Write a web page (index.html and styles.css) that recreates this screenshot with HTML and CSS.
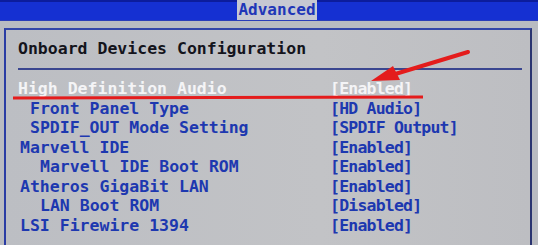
FILE: index.html
```html
<!DOCTYPE html>
<html lang="en">
<head>
  <meta charset="UTF-8">
  <title>Advanced - Onboard Devices Configuration</title>
  <link rel="stylesheet" href="styles.css">
</head>
<body>
  <div class="topbar">
    <div class="tab">Advanced</div>
  </div>

  <div class="panel">
    <div class="title">Onboard Devices Configuration</div>
    <div class="sep"></div>

    <div class="rows">
      <div class="row selected"><span class="label">High Definition Audio</span><span class="value">[Enabled]</span></div>
      <div class="row sub"><span class="label">Front Panel Type</span><span class="value">[HD Audio]</span></div>
      <div class="row sub"><span class="label">SPDIF_OUT Mode Setting</span><span class="value">[SPDIF Output]</span></div>
      <div class="row"><span class="label">Marvell IDE</span><span class="value">[Enabled]</span></div>
      <div class="row sub2"><span class="label">Marvell IDE Boot ROM</span><span class="value">[Enabled]</span></div>
      <div class="row"><span class="label">Atheros GigaBit LAN</span><span class="value">[Enabled]</span></div>
      <div class="row sub2"><span class="label">LAN Boot ROM</span><span class="value">[Disabled]</span></div>
      <div class="row"><span class="label">LSI Firewire 1394</span><span class="value">[Enabled]</span></div>
    </div>
  </div>

  <!-- red annotation drawn over the screen -->
  <svg class="markup" width="538" height="245" viewBox="0 0 538 245">
    <line x1="13" y1="98" x2="423" y2="97" stroke="#e41c1c" stroke-width="3"/>
    <line x1="468" y1="52" x2="392" y2="75" stroke="#e41c1c" stroke-width="4" stroke-linecap="round"/>
    <polygon points="371,81 393,66 400,80" fill="#e41c1c"/>
  </svg>
</body>
</html>
```

FILE: styles.css
```css
body {
  margin: 0;
  width: 538px;
  height: 245px;
  overflow: hidden;
  position: relative;
  background: #b9bbc1;
  font-family: "DejaVu Sans Mono", "Liberation Mono", monospace;
  font-weight: bold;
}

.topbar {
  height: 18px;
  background: #1530d2;
  border-top: 2px solid #0c1c9c;
  border-bottom: 1px solid #2a3cb8;
  padding-left: 237px;
  display: flex;
}

.tab {
  width: 80px;
  background: #c6c8d2;
  color: #2036b8;
  font-size: 16px;
  line-height: 19px;
  text-align: center;
  margin-top: -2px;
  height: 20px;
}

.panel {
  margin: 7px 6px 0 4px;
  height: 215px;
  border-top: 2px solid #3446a8;
  border-left: 2px solid #2a3ca4;
  border-right: 2px solid #2a3470;
  background: linear-gradient(90deg, #bcbec3, #c2c3c6 60%, #bdbec2);
}

.title {
  padding: 8px 0 0 12px;
  font-size: 16.5px;
  line-height: 21px;
  color: #14141c;
}

.sep {
  height: 2px;
  background: #3a4690;
  margin: 9px 8px 0 12px;
}

.rows {
  padding-top: 9px;
}

.row {
  display: grid;
  grid-template-columns: 310px 1fr;
  padding-left: 14px;
  font-size: 16.5px;
  line-height: 19.5px;
  color: #1d38b0;
}

.row.sub {
  padding-left: 24px;
}

.row.sub2 {
  padding-left: 34px;
}

.row.sub .value {
  margin-left: -10px;
}

.row.sub2 .value {
  margin-left: -20px;
}

.row.selected {
  padding-left: 12px;
  color: #f4f4f6;
}

.row.selected .value {
  margin-left: 2px;
}

.value {
  letter-spacing: -0.8px;
}

.markup {
  position: absolute;
  left: 0;
  top: 0;
}
```
